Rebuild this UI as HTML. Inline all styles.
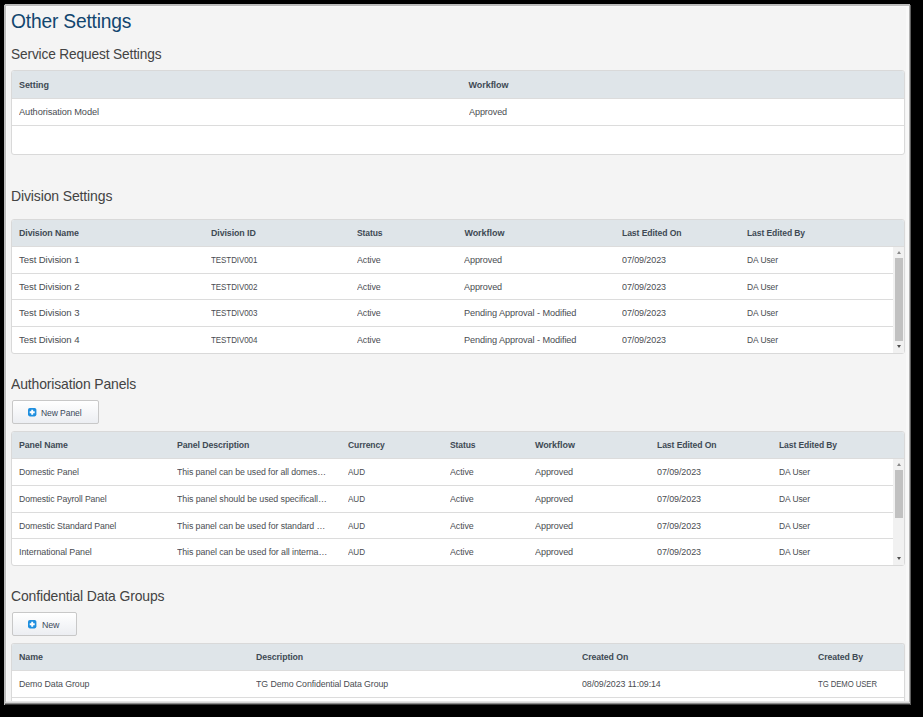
<!DOCTYPE html><html><head><meta charset="utf-8"><style>
html,body{margin:0;padding:0;}
body{width:923px;height:717px;overflow:hidden;background:#000;position:relative;font-family:"Liberation Sans",sans-serif;}
.win{position:absolute;left:4px;top:4px;width:907px;height:701px;background:#f4f4f4;}
.e{position:absolute;}
.t{position:absolute;white-space:nowrap;line-height:20px;height:20px;}
.tb{position:absolute;box-sizing:border-box;border:1px solid #d9d9d9;border-radius:3px;background:#fff;}
.hb{position:absolute;background:#dfe5e9;border-radius:2px 2px 0 0;}
.ln{position:absolute;height:1px;background:#dcdcdc;}
.sb{position:absolute;background:#f1f1f1;}
.th{position:absolute;background:#c1c1c1;}
.au{position:absolute;width:0;height:0;border-left:2.5px solid transparent;border-right:2.5px solid transparent;border-bottom:3px solid #8a8a8a;}
.ad{position:absolute;width:0;height:0;border-left:2.5px solid transparent;border-right:2.5px solid transparent;border-top:3px solid #505050;}
.bt{position:absolute;box-sizing:border-box;border:1px solid #c8c8c8;border-radius:2px;background:linear-gradient(#ffffff,#eceef2);}
.ic{position:absolute;}
</style></head><body>
<div class="win"></div>
<div class="e" style="left:4px;top:4px;width:907px;height:2px;background:#bcbcbc"></div>
<div class="e" style="left:4px;top:4px;width:2px;height:701px;background:#bcbcbc"></div>
<div class="e" style="left:6px;top:6px;width:902px;height:1px;background:#f8f8f8"></div>
<div class="e" style="left:6px;top:6px;width:1px;height:695px;background:#f8f8f8"></div>
<div class="e" style="left:906px;top:6px;width:3px;height:695px;background:#f8f8f8"></div>
<div class="e" style="left:909px;top:5px;width:1px;height:700px;background:#b0b0b0"></div>
<div class="e" style="left:910px;top:5px;width:1px;height:700px;background:#606060"></div>
<div class="e" style="left:4px;top:4px;width:1px;height:1px;background:#222"></div>
<div class="e" style="left:910px;top:4px;width:1px;height:1px;background:#000"></div>


<div class="t" style="left:11.30px;top:10.57px;font-size:20px;color:#12466f;letter-spacing:-0.2px;transform:scaleX(0.961);transform-origin:0 0;">Other Settings</div>
<div class="t" style="left:11.00px;top:44.28px;font-size:14.5px;color:#434343;letter-spacing:-0.145px;transform:scaleX(0.944);transform-origin:0 0;">Service Request Settings</div>
<div class="t" style="left:11.00px;top:185.88px;font-size:14.5px;color:#434343;letter-spacing:-0.145px;transform:scaleX(0.967);transform-origin:0 0;">Division Settings</div>
<div class="t" style="left:11.00px;top:373.88px;font-size:14.5px;color:#434343;letter-spacing:-0.145px;transform:scaleX(0.962);transform-origin:0 0;">Authorisation Panels</div>
<div class="t" style="left:11.00px;top:585.98px;font-size:14.5px;color:#434343;letter-spacing:-0.145px;transform:scaleX(0.963);transform-origin:0 0;">Confidential Data Groups</div>
<div class="tb" style="left:11px;top:70px;width:894px;height:85px;"></div>
<div class="hb" style="left:12px;top:71px;width:892px;height:27px;"></div>
<div class="ln" style="left:12px;top:98px;width:892px;"></div>
<div class="ln" style="left:12px;top:125px;width:892px;"></div>
<div class="t" style="left:19.00px;top:75.38px;font-size:9px;color:#3e4a54;font-weight:bold;letter-spacing:-0.083px;">Setting</div>
<div class="t" style="left:468.50px;top:75.38px;font-size:9px;color:#3e4a54;font-weight:bold;letter-spacing:-0.049px;">Workflow</div>
<div class="t" style="left:19.00px;top:102.47px;font-size:9.6px;color:#4a4d52;letter-spacing:-0.096px;transform:scaleX(0.964);transform-origin:0 0;">Authorisation Model</div>
<div class="t" style="left:468.50px;top:102.47px;font-size:9.6px;color:#4a4d52;letter-spacing:-0.096px;transform:scaleX(0.944);transform-origin:0 0;">Approved</div>
<div class="tb" style="left:11px;top:219px;width:894px;height:135px;"></div>
<div class="hb" style="left:12px;top:220px;width:892px;height:26px;"></div>
<div class="ln" style="left:12px;top:246px;width:892px;"></div>
<div class="ln" style="left:12px;top:273px;width:881px;"></div>
<div class="ln" style="left:12px;top:299px;width:881px;"></div>
<div class="ln" style="left:12px;top:326px;width:881px;"></div>
<div class="t" style="left:19.00px;top:223.48px;font-size:9px;color:#3e4a54;font-weight:bold;letter-spacing:-0.09px;transform:scaleX(0.982);transform-origin:0 0;">Division Name</div>
<div class="t" style="left:210.90px;top:223.48px;font-size:9px;color:#3e4a54;font-weight:bold;letter-spacing:-0.09px;transform:scaleX(0.982);transform-origin:0 0;">Division ID</div>
<div class="t" style="left:356.50px;top:223.48px;font-size:9px;color:#3e4a54;font-weight:bold;letter-spacing:-0.09px;transform:scaleX(0.946);transform-origin:0 0;">Status</div>
<div class="t" style="left:464.40px;top:223.48px;font-size:9px;color:#3e4a54;font-weight:bold;letter-spacing:-0.049px;">Workflow</div>
<div class="t" style="left:621.70px;top:223.48px;font-size:9px;color:#3e4a54;font-weight:bold;letter-spacing:-0.09px;transform:scaleX(0.956);transform-origin:0 0;">Last Edited On</div>
<div class="t" style="left:746.90px;top:223.48px;font-size:9px;color:#3e4a54;font-weight:bold;letter-spacing:-0.09px;transform:scaleX(0.947);transform-origin:0 0;">Last Edited By</div>
<div class="t" style="left:19.00px;top:250.47px;font-size:9.6px;color:#4a4d52;letter-spacing:-0.096px;">Test Division 1</div>
<div class="t" style="left:210.90px;top:250.47px;font-size:9.6px;color:#4a4d52;letter-spacing:-0.096px;transform:scaleX(0.834);transform-origin:0 0;">TESTDIV001</div>
<div class="t" style="left:356.50px;top:250.47px;font-size:9.6px;color:#4a4d52;letter-spacing:-0.096px;transform:scaleX(0.928);transform-origin:0 0;">Active</div>
<div class="t" style="left:464.40px;top:250.47px;font-size:9.6px;color:#4a4d52;letter-spacing:-0.096px;transform:scaleX(0.944);transform-origin:0 0;">Approved</div>
<div class="t" style="left:621.70px;top:250.47px;font-size:9.6px;color:#4a4d52;letter-spacing:-0.096px;transform:scaleX(0.934);transform-origin:0 0;">07/09/2023</div>
<div class="t" style="left:746.90px;top:250.47px;font-size:9.6px;color:#4a4d52;letter-spacing:-0.096px;transform:scaleX(0.883);transform-origin:0 0;">DA User</div>
<div class="t" style="left:19.00px;top:277.47px;font-size:9.6px;color:#4a4d52;letter-spacing:-0.096px;">Test Division 2</div>
<div class="t" style="left:210.90px;top:277.47px;font-size:9.6px;color:#4a4d52;letter-spacing:-0.096px;transform:scaleX(0.834);transform-origin:0 0;">TESTDIV002</div>
<div class="t" style="left:356.50px;top:277.47px;font-size:9.6px;color:#4a4d52;letter-spacing:-0.096px;transform:scaleX(0.928);transform-origin:0 0;">Active</div>
<div class="t" style="left:464.40px;top:277.47px;font-size:9.6px;color:#4a4d52;letter-spacing:-0.096px;transform:scaleX(0.944);transform-origin:0 0;">Approved</div>
<div class="t" style="left:621.70px;top:277.47px;font-size:9.6px;color:#4a4d52;letter-spacing:-0.096px;transform:scaleX(0.934);transform-origin:0 0;">07/09/2023</div>
<div class="t" style="left:746.90px;top:277.47px;font-size:9.6px;color:#4a4d52;letter-spacing:-0.096px;transform:scaleX(0.883);transform-origin:0 0;">DA User</div>
<div class="t" style="left:19.00px;top:303.47px;font-size:9.6px;color:#4a4d52;letter-spacing:-0.096px;">Test Division 3</div>
<div class="t" style="left:210.90px;top:303.47px;font-size:9.6px;color:#4a4d52;letter-spacing:-0.096px;transform:scaleX(0.834);transform-origin:0 0;">TESTDIV003</div>
<div class="t" style="left:356.50px;top:303.47px;font-size:9.6px;color:#4a4d52;letter-spacing:-0.096px;transform:scaleX(0.928);transform-origin:0 0;">Active</div>
<div class="t" style="left:464.40px;top:303.47px;font-size:9.6px;color:#4a4d52;letter-spacing:-0.096px;transform:scaleX(0.957);transform-origin:0 0;">Pending Approval - Modified</div>
<div class="t" style="left:621.70px;top:303.47px;font-size:9.6px;color:#4a4d52;letter-spacing:-0.096px;transform:scaleX(0.934);transform-origin:0 0;">07/09/2023</div>
<div class="t" style="left:746.90px;top:303.47px;font-size:9.6px;color:#4a4d52;letter-spacing:-0.096px;transform:scaleX(0.883);transform-origin:0 0;">DA User</div>
<div class="t" style="left:19.00px;top:330.47px;font-size:9.6px;color:#4a4d52;letter-spacing:-0.096px;">Test Division 4</div>
<div class="t" style="left:210.90px;top:330.47px;font-size:9.6px;color:#4a4d52;letter-spacing:-0.096px;transform:scaleX(0.834);transform-origin:0 0;">TESTDIV004</div>
<div class="t" style="left:356.50px;top:330.47px;font-size:9.6px;color:#4a4d52;letter-spacing:-0.096px;transform:scaleX(0.928);transform-origin:0 0;">Active</div>
<div class="t" style="left:464.40px;top:330.47px;font-size:9.6px;color:#4a4d52;letter-spacing:-0.096px;transform:scaleX(0.957);transform-origin:0 0;">Pending Approval - Modified</div>
<div class="t" style="left:621.70px;top:330.47px;font-size:9.6px;color:#4a4d52;letter-spacing:-0.096px;transform:scaleX(0.934);transform-origin:0 0;">07/09/2023</div>
<div class="t" style="left:746.90px;top:330.47px;font-size:9.6px;color:#4a4d52;letter-spacing:-0.096px;transform:scaleX(0.883);transform-origin:0 0;">DA User</div>
<div class="sb" style="left:893px;top:247px;width:11px;height:106px;"></div>
<div class="th" style="left:895px;top:258px;width:8px;height:83px;"></div>
<div class="au" style="left:897px;top:251px;"></div>
<div class="ad" style="left:897px;top:345px;"></div>
<div class="bt" style="left:12px;top:400px;width:87px;height:24px;"></div>
<svg class="ic" style="left:28px;top:408px;" width="9" height="9" viewBox="0 0 9 9"><rect x="0" y="0" width="8.4" height="8.4" rx="1.8" fill="#1f8fdf"/><path d="M4.2 1.7V6.7M1.7 4.2H6.7" stroke="#fff" stroke-width="1.9"/></svg>
<div class="t" style="left:41.40px;top:402.58px;font-size:9px;color:#3b4a5a;letter-spacing:-0.09px;transform:scaleX(0.949);transform-origin:0 0;">New Panel</div>
<div class="tb" style="left:11px;top:431px;width:894px;height:135px;"></div>
<div class="hb" style="left:12px;top:432px;width:892px;height:26px;"></div>
<div class="ln" style="left:12px;top:458px;width:892px;"></div>
<div class="ln" style="left:12px;top:485px;width:881px;"></div>
<div class="ln" style="left:12px;top:512px;width:881px;"></div>
<div class="ln" style="left:12px;top:538px;width:881px;"></div>
<div class="t" style="left:19.00px;top:435.48px;font-size:9px;color:#3e4a54;font-weight:bold;letter-spacing:-0.09px;transform:scaleX(0.972);transform-origin:0 0;">Panel Name</div>
<div class="t" style="left:176.90px;top:435.48px;font-size:9px;color:#3e4a54;font-weight:bold;letter-spacing:-0.09px;transform:scaleX(0.971);transform-origin:0 0;">Panel Description</div>
<div class="t" style="left:348.10px;top:435.48px;font-size:9px;color:#3e4a54;font-weight:bold;letter-spacing:-0.09px;transform:scaleX(0.947);transform-origin:0 0;">Currency</div>
<div class="t" style="left:450.40px;top:435.48px;font-size:9px;color:#3e4a54;font-weight:bold;letter-spacing:-0.09px;transform:scaleX(0.946);transform-origin:0 0;">Status</div>
<div class="t" style="left:534.90px;top:435.48px;font-size:9px;color:#3e4a54;font-weight:bold;letter-spacing:-0.049px;">Workflow</div>
<div class="t" style="left:656.50px;top:435.48px;font-size:9px;color:#3e4a54;font-weight:bold;letter-spacing:-0.09px;transform:scaleX(0.956);transform-origin:0 0;">Last Edited On</div>
<div class="t" style="left:778.70px;top:435.48px;font-size:9px;color:#3e4a54;font-weight:bold;letter-spacing:-0.09px;transform:scaleX(0.947);transform-origin:0 0;">Last Edited By</div>
<div class="t" style="left:19.00px;top:462.47px;font-size:9.6px;color:#4a4d52;letter-spacing:-0.096px;transform:scaleX(0.908);transform-origin:0 0;">Domestic Panel</div>
<div class="t" style="left:176.90px;top:462.47px;font-size:9.6px;color:#4a4d52;letter-spacing:-0.096px;transform:scaleX(0.914);transform-origin:0 0;">This panel can be used for all domes…</div>
<div class="t" style="left:348.10px;top:462.47px;font-size:9.6px;color:#4a4d52;letter-spacing:-0.096px;transform:scaleX(0.848);transform-origin:0 0;">AUD</div>
<div class="t" style="left:450.40px;top:462.47px;font-size:9.6px;color:#4a4d52;letter-spacing:-0.096px;transform:scaleX(0.928);transform-origin:0 0;">Active</div>
<div class="t" style="left:534.90px;top:462.47px;font-size:9.6px;color:#4a4d52;letter-spacing:-0.096px;transform:scaleX(0.944);transform-origin:0 0;">Approved</div>
<div class="t" style="left:656.50px;top:462.47px;font-size:9.6px;color:#4a4d52;letter-spacing:-0.096px;transform:scaleX(0.934);transform-origin:0 0;">07/09/2023</div>
<div class="t" style="left:778.70px;top:462.47px;font-size:9.6px;color:#4a4d52;letter-spacing:-0.096px;transform:scaleX(0.883);transform-origin:0 0;">DA User</div>
<div class="t" style="left:19.00px;top:489.47px;font-size:9.6px;color:#4a4d52;letter-spacing:-0.096px;transform:scaleX(0.903);transform-origin:0 0;">Domestic Payroll Panel</div>
<div class="t" style="left:176.90px;top:489.47px;font-size:9.6px;color:#4a4d52;letter-spacing:-0.096px;transform:scaleX(0.923);transform-origin:0 0;">This panel should be used specificall…</div>
<div class="t" style="left:348.10px;top:489.47px;font-size:9.6px;color:#4a4d52;letter-spacing:-0.096px;transform:scaleX(0.848);transform-origin:0 0;">AUD</div>
<div class="t" style="left:450.40px;top:489.47px;font-size:9.6px;color:#4a4d52;letter-spacing:-0.096px;transform:scaleX(0.928);transform-origin:0 0;">Active</div>
<div class="t" style="left:534.90px;top:489.47px;font-size:9.6px;color:#4a4d52;letter-spacing:-0.096px;transform:scaleX(0.944);transform-origin:0 0;">Approved</div>
<div class="t" style="left:656.50px;top:489.47px;font-size:9.6px;color:#4a4d52;letter-spacing:-0.096px;transform:scaleX(0.934);transform-origin:0 0;">07/09/2023</div>
<div class="t" style="left:778.70px;top:489.47px;font-size:9.6px;color:#4a4d52;letter-spacing:-0.096px;transform:scaleX(0.883);transform-origin:0 0;">DA User</div>
<div class="t" style="left:19.00px;top:516.47px;font-size:9.6px;color:#4a4d52;letter-spacing:-0.096px;transform:scaleX(0.912);transform-origin:0 0;">Domestic Standard Panel</div>
<div class="t" style="left:176.90px;top:516.47px;font-size:9.6px;color:#4a4d52;letter-spacing:-0.096px;transform:scaleX(0.916);transform-origin:0 0;">This panel can be used for standard …</div>
<div class="t" style="left:348.10px;top:516.47px;font-size:9.6px;color:#4a4d52;letter-spacing:-0.096px;transform:scaleX(0.848);transform-origin:0 0;">AUD</div>
<div class="t" style="left:450.40px;top:516.47px;font-size:9.6px;color:#4a4d52;letter-spacing:-0.096px;transform:scaleX(0.928);transform-origin:0 0;">Active</div>
<div class="t" style="left:534.90px;top:516.47px;font-size:9.6px;color:#4a4d52;letter-spacing:-0.096px;transform:scaleX(0.944);transform-origin:0 0;">Approved</div>
<div class="t" style="left:656.50px;top:516.47px;font-size:9.6px;color:#4a4d52;letter-spacing:-0.096px;transform:scaleX(0.934);transform-origin:0 0;">07/09/2023</div>
<div class="t" style="left:778.70px;top:516.47px;font-size:9.6px;color:#4a4d52;letter-spacing:-0.096px;transform:scaleX(0.883);transform-origin:0 0;">DA User</div>
<div class="t" style="left:19.00px;top:542.47px;font-size:9.6px;color:#4a4d52;letter-spacing:-0.096px;transform:scaleX(0.930);transform-origin:0 0;">International Panel</div>
<div class="t" style="left:176.90px;top:542.47px;font-size:9.6px;color:#4a4d52;letter-spacing:-0.096px;transform:scaleX(0.920);transform-origin:0 0;">This panel can be used for all interna…</div>
<div class="t" style="left:348.10px;top:542.47px;font-size:9.6px;color:#4a4d52;letter-spacing:-0.096px;transform:scaleX(0.848);transform-origin:0 0;">AUD</div>
<div class="t" style="left:450.40px;top:542.47px;font-size:9.6px;color:#4a4d52;letter-spacing:-0.096px;transform:scaleX(0.928);transform-origin:0 0;">Active</div>
<div class="t" style="left:534.90px;top:542.47px;font-size:9.6px;color:#4a4d52;letter-spacing:-0.096px;transform:scaleX(0.944);transform-origin:0 0;">Approved</div>
<div class="t" style="left:656.50px;top:542.47px;font-size:9.6px;color:#4a4d52;letter-spacing:-0.096px;transform:scaleX(0.934);transform-origin:0 0;">07/09/2023</div>
<div class="t" style="left:778.70px;top:542.47px;font-size:9.6px;color:#4a4d52;letter-spacing:-0.096px;transform:scaleX(0.883);transform-origin:0 0;">DA User</div>
<div class="sb" style="left:893px;top:459px;width:11px;height:106px;"></div>
<div class="th" style="left:895px;top:470px;width:8px;height:48px;"></div>
<div class="au" style="left:897px;top:463px;"></div>
<div class="ad" style="left:897px;top:557px;"></div>
<div class="bt" style="left:12px;top:612px;width:65px;height:24px;"></div>
<svg class="ic" style="left:28px;top:620px;" width="9" height="9" viewBox="0 0 9 9"><rect x="0" y="0" width="8.4" height="8.4" rx="1.8" fill="#1f8fdf"/><path d="M4.2 1.7V6.7M1.7 4.2H6.7" stroke="#fff" stroke-width="1.9"/></svg>
<div class="t" style="left:41.60px;top:614.58px;font-size:9px;color:#3b4a5a;letter-spacing:-0.09px;transform:scaleX(0.982);transform-origin:0 0;">New</div>
<div class="tb" style="left:11px;top:643px;width:894px;height:59px;border-bottom:none;border-radius:3px 3px 0 0;"></div>
<div class="hb" style="left:12px;top:644px;width:892px;height:26px;"></div>
<div class="ln" style="left:12px;top:670px;width:892px;"></div>
<div class="ln" style="left:12px;top:697px;width:892px;"></div>
<div class="t" style="left:19.00px;top:647.48px;font-size:9px;color:#3e4a54;font-weight:bold;letter-spacing:-0.09px;transform:scaleX(0.986);transform-origin:0 0;">Name</div>
<div class="t" style="left:256.30px;top:647.48px;font-size:9px;color:#3e4a54;font-weight:bold;letter-spacing:-0.09px;transform:scaleX(0.971);transform-origin:0 0;">Description</div>
<div class="t" style="left:581.90px;top:647.48px;font-size:9px;color:#3e4a54;font-weight:bold;letter-spacing:-0.09px;transform:scaleX(0.969);transform-origin:0 0;">Created On</div>
<div class="t" style="left:818.30px;top:647.48px;font-size:9px;color:#3e4a54;font-weight:bold;letter-spacing:-0.09px;transform:scaleX(0.966);transform-origin:0 0;">Created By</div>
<div class="t" style="left:19.00px;top:674.47px;font-size:9.6px;color:#4a4d52;letter-spacing:-0.096px;transform:scaleX(0.920);transform-origin:0 0;">Demo Data Group</div>
<div class="t" style="left:256.30px;top:674.47px;font-size:9.6px;color:#4a4d52;letter-spacing:-0.096px;transform:scaleX(0.916);transform-origin:0 0;">TG Demo Confidential Data Group</div>
<div class="t" style="left:581.90px;top:674.47px;font-size:9.6px;color:#4a4d52;letter-spacing:-0.096px;transform:scaleX(0.920);transform-origin:0 0;">08/09/2023 11:09:14</div>
<div class="t" style="left:818.30px;top:674.47px;font-size:9.6px;color:#4a4d52;letter-spacing:-0.096px;transform:scaleX(0.808);transform-origin:0 0;">TG DEMO USER</div>
<div class="e" style="left:6px;top:701px;width:903px;height:1px;background:#e6e6e6"></div>
<div class="e" style="left:5px;top:702px;width:905px;height:1px;background:#d4d4d4"></div>
<div class="e" style="left:5px;top:703px;width:905px;height:1px;background:#8c8c8c"></div>
<div class="e" style="left:5px;top:704px;width:905px;height:1px;background:#3a3a3a"></div>
</body></html>
